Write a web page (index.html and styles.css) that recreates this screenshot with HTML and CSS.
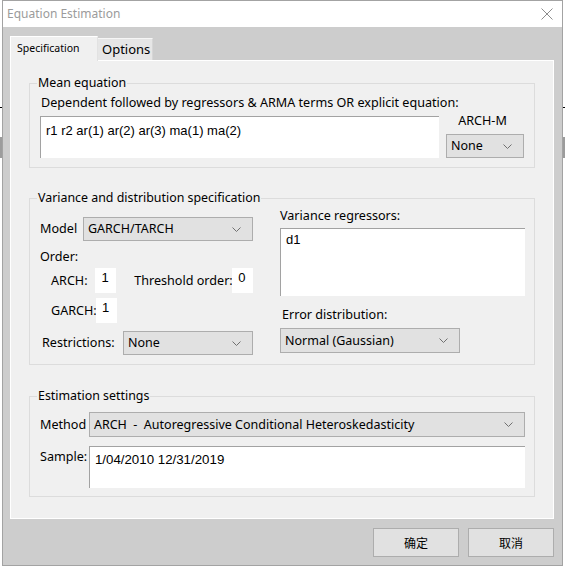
FILE: index.html
```html
<!DOCTYPE html>
<html>
<head>
<meta charset="utf-8">
<link rel="stylesheet" href="styles.css">
</head>
<body>
<div class="window">
  <div class="titlebar">
    <span class="title">Equation Estimation</span>
    <svg class="close" width="12" height="12" viewBox="0 0 12 12"><path d="M0.5 0.5L11.5 11.5M11.5 0.5L0.5 11.5" stroke="#8c8c8c" stroke-width="1" fill="none"/></svg>
  </div>
  <div class="client">
    <div class="tabs">
      <div class="tab tab-active">Specification</div>
      <div class="tab tab-other">Options</div>
    </div>
    <div class="panel">
      <fieldset class="group g-mean">
        <legend>Mean equation</legend>
        <div class="lbl dep">Dependent followed by regressors &amp; ARMA terms OR explicit equation:</div>
        <div class="mean-row">
          <div class="textbox eq">r1 r2 ar(1) ar(2) ar(3) ma(1) ma(2)</div>
          <div class="archm">
            <div class="lbl archm-lbl">ARCH-M</div>
            <div class="select sel-archm"><span>None</span><svg width="9" height="5" viewBox="0 0 9 5"><path d="M0.5 0.5L4.5 4.5L8.5 0.5" stroke="#707070" fill="none"/></svg></div>
          </div>
        </div>
      </fieldset>

      <fieldset class="group g-var">
        <legend>Variance and distribution specification</legend>
        <div class="var-grid">
          <div class="var-left">
            <div class="row model-row">
              <span class="lbl model-lbl">Model</span>
              <div class="select sel-model"><span>GARCH/TARCH</span><svg width="9" height="5" viewBox="0 0 9 5"><path d="M0.5 0.5L4.5 4.5L8.5 0.5" stroke="#707070" fill="none"/></svg></div>
            </div>
            <div class="lbl order-lbl">Order:</div>
            <div class="row order-row arch-row">
              <span class="lbl ord-lbl">ARCH:</span>
              <div class="num">1</div>
              <span class="lbl thr-lbl">Threshold order:</span>
              <div class="num">0</div>
            </div>
            <div class="row order-row garch-row">
              <span class="lbl ord-lbl">GARCH:</span>
              <div class="num">1</div>
            </div>
            <div class="row restr-row">
              <span class="lbl restr-lbl">Restrictions:</span>
              <div class="select sel-restr"><span>None</span><svg width="9" height="5" viewBox="0 0 9 5"><path d="M0.5 0.5L4.5 4.5L8.5 0.5" stroke="#707070" fill="none"/></svg></div>
            </div>
          </div>
          <div class="var-right">
            <div class="lbl vr-lbl">Variance regressors:</div>
            <div class="textbox vr">d1</div>
            <div class="lbl ed-lbl">Error distribution:</div>
            <div class="select sel-err"><span>Normal (Gaussian)</span><svg width="9" height="5" viewBox="0 0 9 5"><path d="M0.5 0.5L4.5 4.5L8.5 0.5" stroke="#707070" fill="none"/></svg></div>
          </div>
        </div>
      </fieldset>

      <fieldset class="group g-est">
        <legend>Estimation settings</legend>
        <div class="row method-row">
          <span class="lbl est-lbl">Method</span>
          <div class="select sel-method"><span class="pre">ARCH  -  Autoregressive Conditional Heteroskedasticity</span><svg width="9" height="5" viewBox="0 0 9 5"><path d="M0.5 0.5L4.5 4.5L8.5 0.5" stroke="#707070" fill="none"/></svg></div>
        </div>
        <div class="row sample-row">
          <span class="lbl est-lbl sample-lbl">Sample:</span>
          <div class="textbox sample">1/04/2010 12/31/2019</div>
        </div>
      </fieldset>
    </div>
    <div class="buttons">
      <div class="btn">确定</div>
      <div class="btn">取消</div>
    </div>
  </div>
</div>
</body>
</html>
```
FILE: styles.css
```css
* { box-sizing: border-box; }
html, body { margin: 0; padding: 0; }
body {
  width: 565px;
  height: 568px;
  overflow: hidden;
  font-family: "Segoe UI", "Noto Sans", "Noto Sans CJK SC", sans-serif;
  font-size: 12px;
  color: #000;
  background:
    linear-gradient(#000, #000) 0 107px / 565px 1px no-repeat,
    linear-gradient(#9c9c9c, #9c9c9c) 0 137px / 565px 21px no-repeat,
    #fff;
}
.window {
  margin-left: 2px;
  width: 561px;
  height: 566px;
  border: 1px solid #a3a3a3;
  background: #cdcdcd;
  display: flex;
  flex-direction: column;
}
.titlebar {
  height: 26px;
  background: #fff;
  display: flex;
  align-items: center;
  justify-content: space-between;
  padding: 0 9px 1px 4px;
  color: #9b9b9b;
  font-size: 12px;
  flex: none;
}
.close { display: block; }
.client {
  flex: 1;
  padding: 9px 8px 0 7px;
  display: flex;
  flex-direction: column;
}
.tabs {
  display: flex;
  align-items: flex-end;
  height: 24px;
  flex: none;
}
.tab {
  line-height: 16px;
  white-space: nowrap;
}
.tab-active {
  position: relative;
  z-index: 1;
  width: 88px;
  height: 25px;
  margin-bottom: -1px;
  background: #f0f0f0;
  border: 1px solid #fff;
  border-bottom: none;
  border-right-color: #e2e2e2;
  padding: 3px 0 0 6px;
  font-size: 10.5px;
}
.tab-other {
  width: 55px;
  height: 22px;
  background: #e6e6e6;
  border: 1px solid #f6f6f6;
  border-left: none;
  border-bottom: none;
  border-right-color: #d6d6d6;
  padding: 2px 0 0 4px;
  font-size: 13px;
}
.panel {
  flex: none;
  height: 459px;
  background: #f0f0f0;
  border: 1px solid #fff;
  padding: 14px 18px 0 18px;
}
.group {
  margin: 0;
  padding: 0 9px 8px 10px;
  border: 1px solid #dcdcdc;
  min-width: 0;
}
.group legend {
  margin-left: -3px;
  padding: 0 1px;
  line-height: 16px;
  font-size: 12.4px;
}
.lbl { line-height: 16px; white-space: nowrap; font-size: 12.6px; }
.row { display: flex; align-items: center; }

/* Mean equation */
.g-mean { padding-bottom: 9px; }
.dep { padding: 4px 0 0 1px; }
.mean-row { display: flex; margin-top: 1px; }
.textbox {
  background: #fff;
  border-top: 1px solid #a2a2a2;
  border-left: 1px solid #a2a2a2;
  font-family: "Liberation Sans", Arial, sans-serif;
  font-size: 13px;
  line-height: 16px;
  padding: 5px 0 0 5px;
}
.eq { width: 399px; height: 42px; margin-top: 4px; padding-top: 6px; }
.archm {
  margin-left: 7px;
  width: 78px;
  display: flex;
  flex-direction: column;
  align-items: center;
}
.archm-lbl { padding-left: 0; margin-left: -5px; margin-top: 1px; }
.sel-archm { margin-top: 5px; width: 78px; height: 24px; }

.select {
  background: #e1e1e1;
  border: 1px solid #adadad;
  display: flex;
  align-items: center;
  justify-content: space-between;
  padding: 0 11px 0 4px;
  white-space: nowrap;
  line-height: 16px;
  font-size: 12.5px;
}
.select svg { flex: none; display: block; }
.pre { white-space: pre; }

/* Variance */
.g-var { margin-top: 22px; padding-bottom: 9px; }
.var-grid {
  display: grid;
  grid-template-columns: 213px 245px;
  column-gap: 27px;
}
.model-row { margin-top: 11px; height: 24px; }
.model-lbl { width: 43px; }
.sel-model { width: 170px; height: 24px; }
.order-lbl { margin-top: 8px; }
.order-row { height: 25px; align-items: flex-start; }
.arch-row { margin-top: 3px; }
.garch-row { margin-top: 5px; }
.ord-lbl { width: 56px; padding-left: 11px; padding-top: 5px; }
.thr-lbl { width: 116px; padding-left: 18px; padding-top: 5px; }
.num {
  width: 21px;
  height: 25px;
  background: #fff;
  padding: 2px 0 0 6px;
  line-height: 16px;
  font-family: "Liberation Sans", Arial, sans-serif;
  font-size: 13px;
}
.restr-row { margin-top: 8px; height: 24px; }
.restr-lbl { width: 83px; padding-left: 2px; }
.sel-restr { width: 130px; height: 24px; }

.vr-lbl { margin-top: 2px; }
.vr { margin-top: 4px; width: 245px; height: 68px; padding-top: 3px; }
.ed-lbl { margin-top: 11px; padding-left: 2px; }
.sel-err { margin-top: 5px; width: 180px; height: 25px; }

/* Estimation */
.g-est { margin-top: 23px; }
.method-row { margin-top: 8px; height: 25px; }
.est-lbl { width: 49px; }
.sel-method { width: 437px; height: 25px; }
.sample-row { margin-top: 9px; align-items: flex-start; }
.sample-lbl { padding-top: 3px; }
.sample { width: 437px; height: 42px; font-size: 13.3px; }

/* Buttons */
.buttons {
  display: flex;
  justify-content: flex-end;
  gap: 9px;
  margin-top: 9px;
  padding-right: 0;
}
.btn {
  width: 86px;
  height: 29px;
  background: #e1e1e1;
  border: 1px solid #adadad;
  display: flex;
  align-items: center;
  justify-content: center;
  font-family: "Noto Sans CJK SC", sans-serif;
  font-size: 12px;
}
```
